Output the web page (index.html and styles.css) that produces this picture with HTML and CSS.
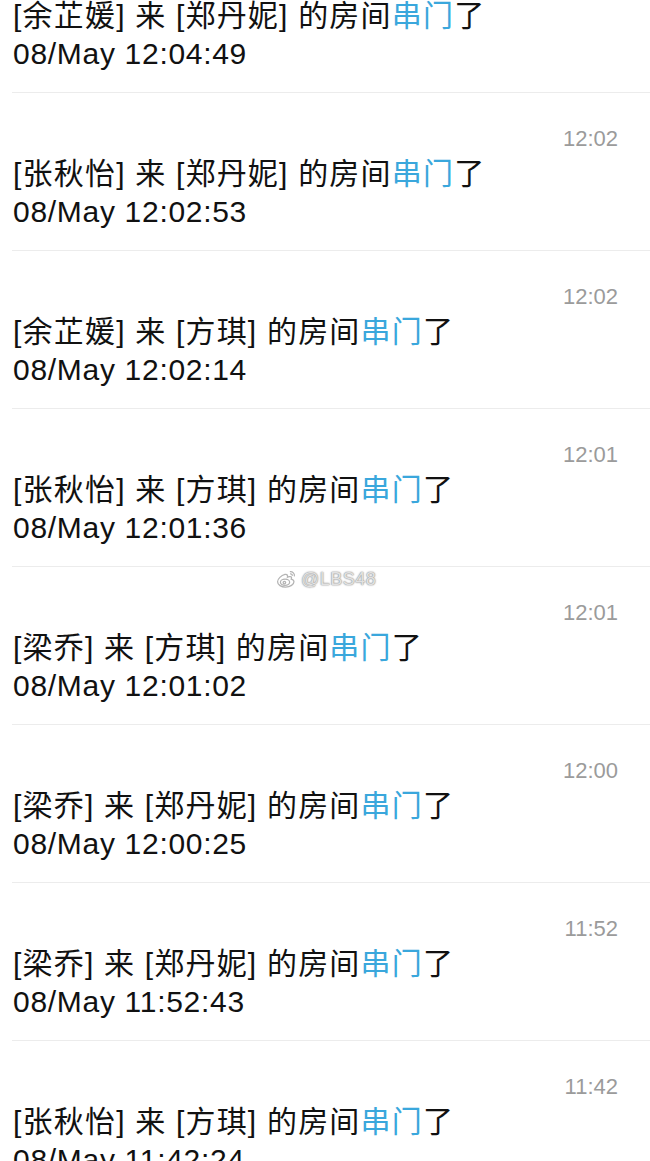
FILE: index.html
```html
<!DOCTYPE html>
<html lang="zh-CN">
<head>
    <meta charset="UTF-8">
    <meta name="viewport" content="width=device-width, initial-scale=1.0">
    <title>串门记录</title>
    <link rel="stylesheet" href="styles.css">
</head>
<body>
    <!-- 串门消息列表 -->
    <div class="feed">
        <div class="item">
            <div class="time">12:04</div>
            <div class="msg">[余芷媛] 来 [郑丹妮] 的房间<span class="hl">串门</span>了</div>
            <div class="date">08/May 12:04:49</div>
        </div>
        <div class="item">
            <div class="time">12:02</div>
            <div class="msg">[张秋怡] 来 [郑丹妮] 的房间<span class="hl">串门</span>了</div>
            <div class="date">08/May 12:02:53</div>
        </div>
        <div class="item">
            <div class="time">12:02</div>
            <div class="msg">[余芷媛] 来 [方琪] 的房间<span class="hl">串门</span>了</div>
            <div class="date">08/May 12:02:14</div>
        </div>
        <div class="item">
            <div class="time">12:01</div>
            <div class="msg">[张秋怡] 来 [方琪] 的房间<span class="hl">串门</span>了</div>
            <div class="date">08/May 12:01:36</div>
        </div>
        <div class="item">
            <div class="time">12:01</div>
            <div class="msg">[梁乔] 来 [方琪] 的房间<span class="hl">串门</span>了</div>
            <div class="date">08/May 12:01:02</div>
        </div>
        <div class="item">
            <div class="time">12:00</div>
            <div class="msg">[梁乔] 来 [郑丹妮] 的房间<span class="hl">串门</span>了</div>
            <div class="date">08/May 12:00:25</div>
        </div>
        <div class="item">
            <div class="time">11:52</div>
            <div class="msg">[梁乔] 来 [郑丹妮] 的房间<span class="hl">串门</span>了</div>
            <div class="date">08/May 11:52:43</div>
        </div>
        <div class="item">
            <div class="time">11:42</div>
            <div class="msg">[张秋怡] 来 [方琪] 的房间<span class="hl">串门</span>了</div>
            <div class="date">08/May 11:42:24</div>
        </div>
    </div>

    <!-- 水印 -->
    <div class="watermark">
        <svg class="wb-logo" width="21" height="19" viewBox="0 0 20 18" fill="none" stroke="#b4b4b4" stroke-width="1.2">
            <path d="M8.5 4.2C5 5.2 1.5 8.3 1.5 11.2c0 3 3.6 5 7.6 5 4.6 0 8-2.6 8-5 0-1.6-1.5-2.3-2.6-2.6.6-1.4.5-2.7-1.8-2.3-1 .2-1.8.6-1.8.6.3-1.3.2-3.2-2.4-2.7z"/>
            <ellipse cx="8.6" cy="11.6" rx="4.4" ry="2.9"/>
            <circle cx="8" cy="11.9" r="1.2"/>
            <path d="M13.2 1.6c2.6-.4 4.8 1.8 4.3 4.4"/>
            <path d="M13.4 3.6c1.2-.2 2.3.8 2.1 2"/>
        </svg>
        <span>@LBS48</span>
    </div>
</body>
</html>
```

FILE: styles.css
```css
body {
    margin: 0;
    padding: 0;
    background: #ffffff;
    color: #111111;
    font-family: "Liberation Sans", "Noto Sans CJK SC", sans-serif;
    overflow: hidden;
}
.feed {
    margin-top: -65px;
    margin-left: 12px;
}
.item {
    padding: 34px 32px 19px 1px;
    border-bottom: 1px solid #ececec;
}
.time {
    text-align: right;
    font-size: 22px;
    line-height: 24px;
    color: #9b9b9b;
    margin-bottom: 4px;
}
.msg {
    font-size: 30px;
    line-height: 38px;
    letter-spacing: 1.2px;
    white-space: nowrap;
}
.hl {
    color: #3aa7dc;
}
.date {
    font-size: 30px;
    line-height: 38px;
    letter-spacing: 0.7px;
}
.watermark {
    position: absolute;
    left: 276px;
    top: 569px;
    display: flex;
    align-items: center;
    gap: 4px;
    font-size: 18px;
    letter-spacing: 0.5px;
    color: #e2e2e2;
    text-shadow: 0 0 2px #8a8a8a, 0 0 1px #9a9a9a;
}
```
